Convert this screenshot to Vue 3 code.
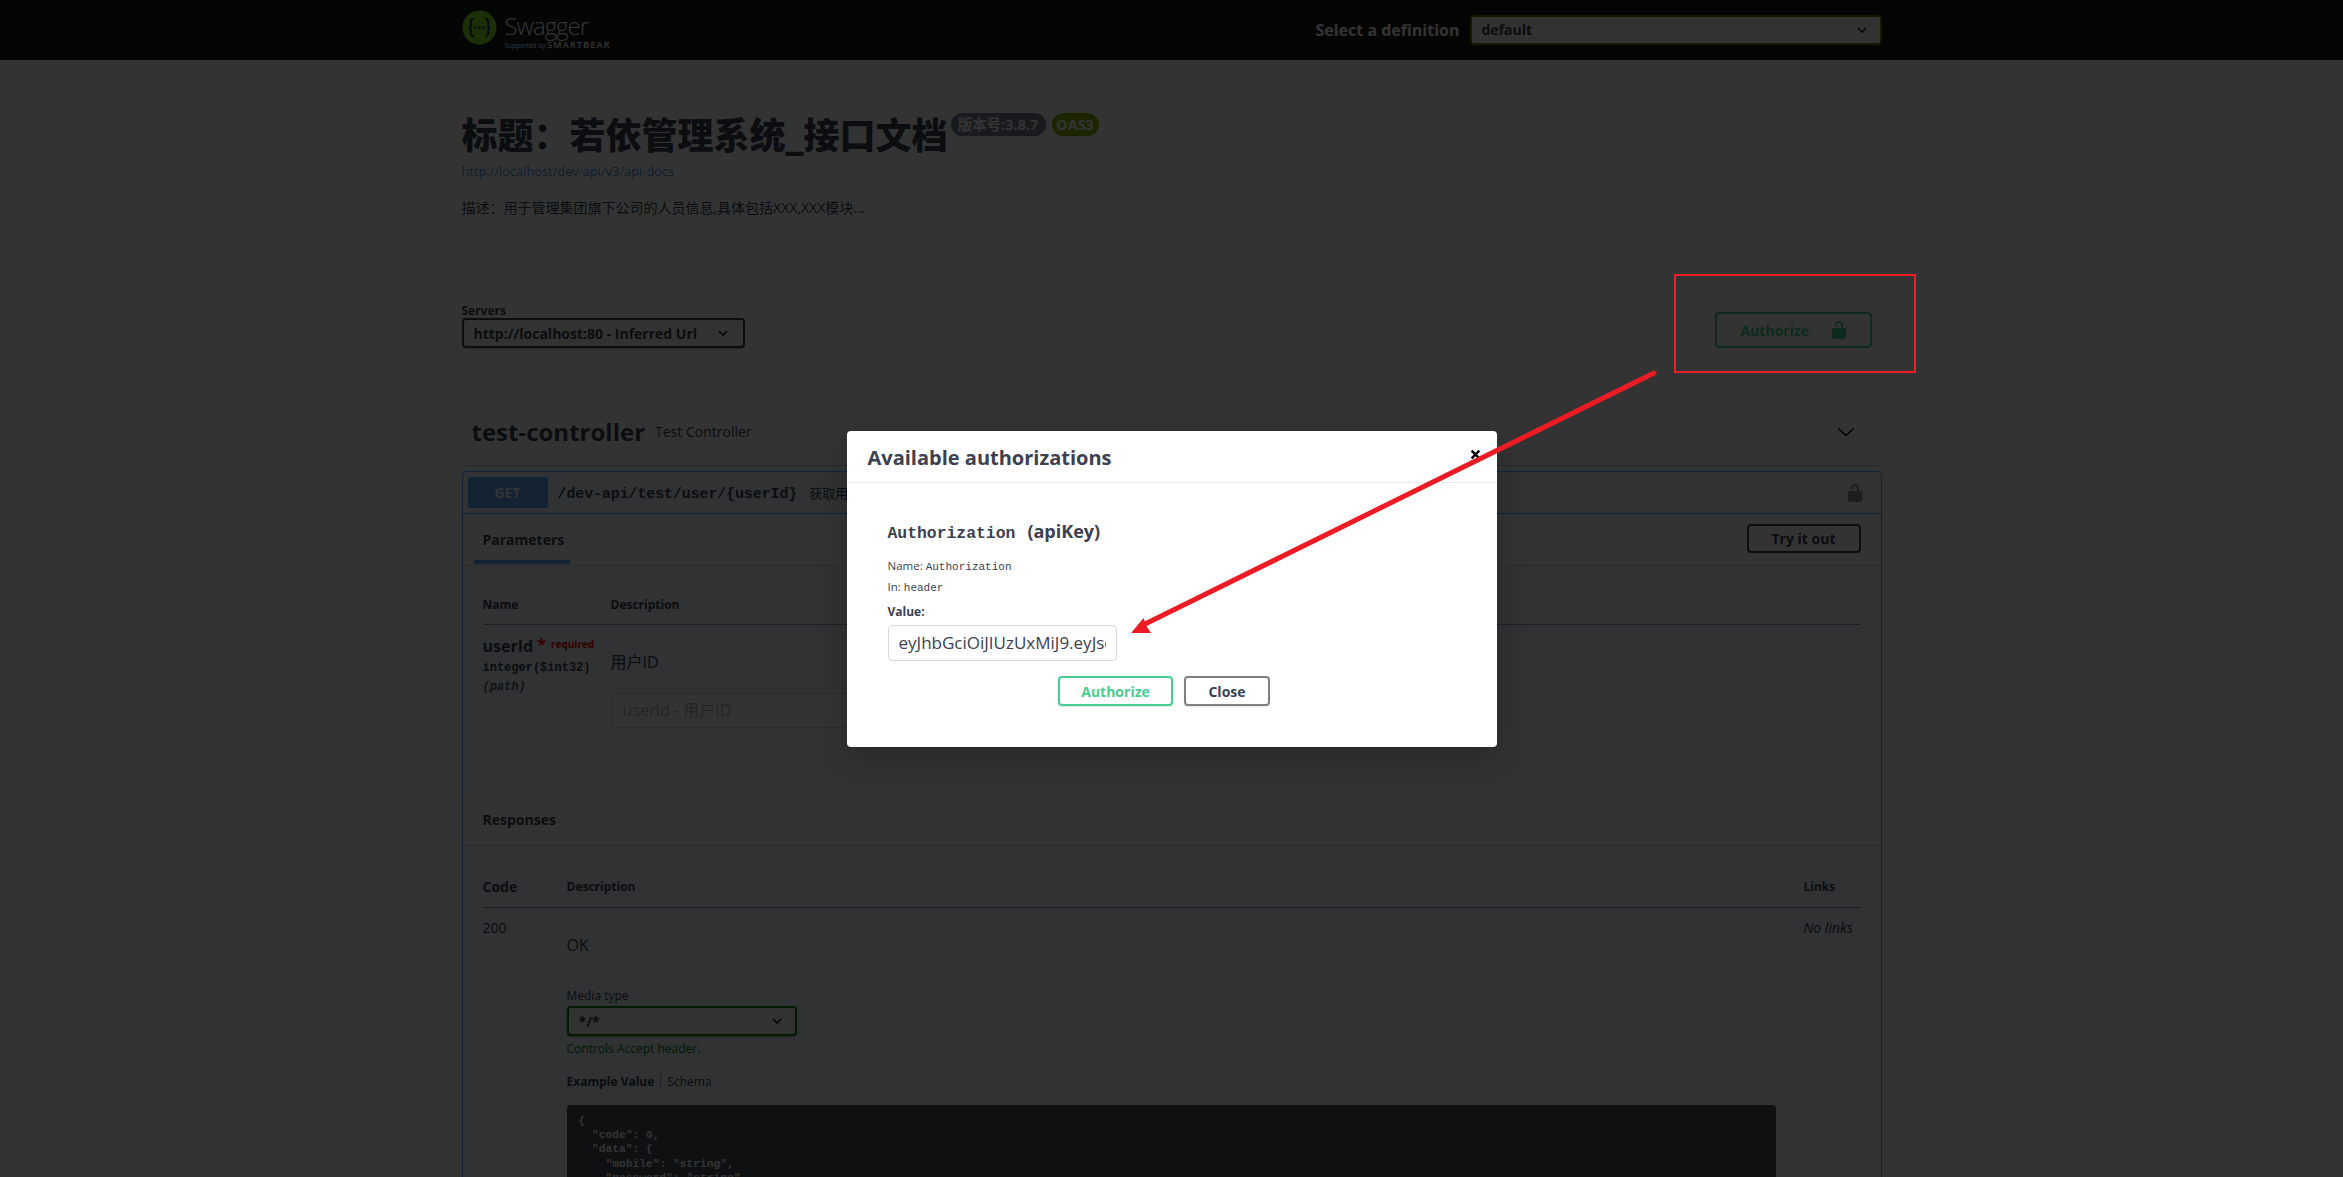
<script setup>
const codeLines = [
  '{',
  '  "code": 0,',
  '  "data": {',
  '    "mobile": "string",',
  '    "password": "string",',
]
const unlock = 'M15.8 8H14V5.6C14 2.703 12.665 1 10 1 7.334 1 6 2.703 6 5.6V6h2v-.801C8 3.754 8.797 3 10 3c1.203 0 2 .754 2 2.199V8H4c-.553 0-1 .646-1 1.199V17c0 .549.428 1.139.951 1.307l1.197.387C5.672 18.861 6.55 19 7.1 19h5.8c.549 0 1.428-.139 1.951-.307l1.196-.387c.524-.167.953-.757.953-1.306V9.199C17 8.646 16.352 8 15.8 8z'
</script>

<template>
  <div class="screen">
    <header class="topbar">
      <div class="wrap topbar-in">
        <div class="logo">
          <svg class="logo-mark" viewBox="0 0 36 36">
            <circle cx="18" cy="18" r="17.5" fill="#85ea2d" />
            <path d="M12 9c-3 0-3 2-3 4v3c0 1.500-1 2-2 2 1 0 2 .5 2 2v3c0 2 0 4 3 4M24 9c3 0 3 2 3 4v3c0 1.500 1 2 2 2-1 0-2 .5-2 2v3c0 2 0 4-3 4" fill="none" stroke="#173647" stroke-width="2" />
            <circle cx="13.500" cy="18" r="1.300" fill="#173647" />
            <circle cx="18" cy="18" r="1.300" fill="#173647" />
            <circle cx="22.500" cy="18" r="1.300" fill="#173647" />
          </svg>
          <div class="logo-text">
            <div class="logo-name">Swagger<span class="logo-dot">.</span></div>
            <div class="logo-sub">Supported by <b>SMARTBEAR</b></div>
          </div>
        </div>
        <div class="definition">
          <span class="definition-label">Select a definition</span>
          <div class="select top-select">
            <span>default</span>
            <svg class="chev" viewBox="0 0 20 20"><path d="M5 7.500l5 5 5-5" fill="none" stroke="currentColor" stroke-width="2" /></svg>
          </div>
        </div>
      </div>
    </header>

    <main class="wrap">
      <section class="info">
        <div class="title-row">
          <h1>标题：若依管理系统_接口文档</h1>
          <span class="pill version">版本号:3.8.7</span>
          <span class="pill oas">OAS3</span>
        </div>
        <div class="url">http://localhost/dev-api/v3/api-docs</div>
        <div class="desc">描述：用于管理集团旗下公司的人员信息,具体包括XXX,XXX模块...</div>
      </section>

      <section class="scheme">
        <div>
          <div class="servers-label">Servers</div>
          <div class="select server-select">
            <span>http://localhost:80 - Inferred Url</span>
            <svg class="chev" viewBox="0 0 20 20"><path d="M5 7.500l5 5 5-5" fill="none" stroke="currentColor" stroke-width="2" /></svg>
          </div>
        </div>
        <button class="btn-authorize">
          <span>Authorize</span>
          <svg class="lock-green" viewBox="0 0 20 20"><path :d="unlock" fill="#49cc90" /></svg>
        </button>
      </section>
    </main>
    <div class="scheme-rule"></div>

    <main class="wrap">
      <div class="tag-row">
        <span class="tag-name">test-controller</span>
        <span class="tag-desc">Test Controller</span>
        <svg class="tag-chev" viewBox="0 0 20 10"><path d="M1.500 1l8.500 8 8.500-8" fill="none" stroke="#000" stroke-width="1.600" /></svg>
      </div>

      <div class="opblock">
        <div class="summary">
          <span class="method">GET</span>
          <span class="path">/dev-api/test/user/{userId}</span>
          <span class="summary-desc">获取用户详细</span>
          <svg class="lock-gray" viewBox="0 0 20 20"><path :d="unlock" fill="#8c8f96" /></svg>
        </div>

        <div class="section-head params-head">
          <span class="tab">Parameters</span>
          <button class="try">Try it out</button>
        </div>

        <div class="inner">
          <div class="param-head"><span class="name-col">Name</span><span>Description</span></div>
          <div class="param-row">
            <div class="name-col">
              <div class="param-name">userId <span class="star">*</span><span class="required">required</span></div>
              <div class="param-type">integer($int32)</div>
              <div class="param-in">(path)</div>
            </div>
            <div class="param-desc">
              <div class="param-text">用户ID</div>
              <div class="param-input">userId - 用户ID</div>
            </div>
          </div>
        </div>

        <div class="section-head resp-head"><span>Responses</span></div>

        <div class="inner">
          <div class="resp-grid resp-columns">
            <span class="code-title">Code</span><span>Description</span><span>Links</span>
          </div>
          <div class="resp-grid resp-row">
            <div class="status">200</div>
            <div>
              <div class="ok">OK</div>
              <div class="media-label">Media type</div>
              <div class="select media-select">
                <span>*/*</span>
                <svg class="chev" viewBox="0 0 20 20"><path d="M5 7.500l5 5 5-5" fill="none" stroke="currentColor" stroke-width="2" /></svg>
              </div>
              <div class="controls">Controls Accept header.</div>
              <div class="example-tabs"><b>Example Value</b><i class="divider"></i><span>Schema</span></div>
              <div class="code-box"><div v-for="(line, i) in codeLines" :key="i" class="code-line">{{ line }}</div></div>
            </div>
            <div class="no-links">No links</div>
          </div>
        </div>
      </div>
    </main>

    <div class="backdrop">
      <div class="modal">
        <div class="modal-head">
          <span class="modal-title">Available authorizations</span>
          <svg class="modal-x" viewBox="0 0 10 10"><path d="M1.500 1.500l7 7M8.500 1.500l-7 7" stroke="#000" stroke-width="2.200" /></svg>
        </div>
        <div class="modal-body">
          <div class="auth-title"><span class="mono">Authorization</span><span class="auth-kind">(apiKey)</span></div>
          <div class="auth-line first">Name: <span class="mono">Authorization</span></div>
          <div class="auth-line second">In: <span class="mono">header</span></div>
          <div class="value-label">Value:</div>
          <div class="value-input"><span>eyJhbGciOiJIUzUxMiJ9.eyJsd</span></div>
          <div class="modal-actions">
            <button class="modal-btn green">Authorize</button>
            <button class="modal-btn gray">Close</button>
          </div>
        </div>
      </div>
    </div>

    <svg class="annotations" viewBox="0 0 2343 1177">
      <rect x="1675" y="275" width="240" height="97" fill="none" stroke="#ed1c24" stroke-width="2" />
      <path d="M1654 373L1143 625" fill="none" stroke="#ed1c24" stroke-width="5" stroke-linecap="round" />
      <path d="M1131 633L1143.500 618 1147 627 1151 633z" fill="#ed1c24" />
    </svg>
  </div>
</template>

<style>
html, body { margin: 0; overflow: hidden; background: #fff; }
</style>

<style scoped>
.screen {
  position: relative;
  width: 2343px;
  height: 1177px;
  overflow: hidden;
  background: #fff;
  color: #3b4151;
  font-family: "Open Sans", "Noto Sans CJK SC", sans-serif;
}
.wrap { width: 1420px; margin: 0 auto; }
.mono { font-family: "Liberation Mono", "Noto Sans CJK SC", monospace; }

.topbar { height: 60px; background: #1b1b1b; }
.topbar-in { display: flex; align-items: center; justify-content: space-between; height: 60px; }
.logo { display: flex; align-items: flex-start; color: #fff; padding-top: 1px; }
.logo-mark { width: 35px; height: 35px; display: block; margin-right: 8px; }
.logo-name { font-size: 24px; line-height: 32px; font-weight: 300; letter-spacing: -1px; height: 29px; }
.logo-dot { font-size: 8px; }
.logo-sub { font-size: 6.5px; line-height: 12px; white-space: nowrap; }
.logo-sub b { font-size: 9px; font-weight: 600; letter-spacing: 1.200px; }
.definition { display: flex; align-items: center; }
.definition-label { color: #fff; font-size: 16px; font-weight: 700; margin-right: 10px; }

.select {
  display: flex;
  align-items: center;
  justify-content: space-between;
  box-sizing: border-box;
  height: 30px;
  border: 2px solid #41444e;
  border-radius: 4px;
  background: #f7f7f7;
  color: #3b4151;
  font-size: 14px;
  font-weight: 700;
  padding: 0 10px;
  box-shadow: 0 1px 2px rgba(0, 0, 0, .25);
}
.chev { width: 16px; height: 16px; color: #222; flex: none; }
.top-select { width: 412px; border-color: #547f00; }
.top-select span { margin-top: -2px; }

.info { padding-top: 56px; }
.title-row { display: flex; align-items: flex-start; }
h1 { margin: 0; font-size: 36px; line-height: 40px; height: 40px; font-weight: 900; color: #3b4151; }
.pill {
  height: 23px;
  line-height: 23px;
  border-radius: 12px;
  color: #fff;
  font-size: 14.500px;
  font-weight: 700;
  box-sizing: border-box;
  margin-top: -3px;
  text-align: center;
  white-space: nowrap;
}
.version { width: 95px; background: #7d8492; margin-left: 3px; }
.oas { width: 47px; background: #89bf04; margin-left: 6px; }
.url { margin-top: 5px; height: 20px; font-size: 12.800px; line-height: 20px; color: #4990e2; }
.desc { margin-top: 17px; height: 20px; font-size: 14px; line-height: 20px; }

.scheme {
  margin-top: 85px;
  display: flex;
  justify-content: space-between;
  align-items: flex-end;
  padding-bottom: 30px;
}
.servers-label { font-size: 12px; font-weight: 700; line-height: 15px; }
.server-select { width: 283px; padding-right: 12px; }
.btn-authorize {
  display: flex;
  align-items: center;
  justify-content: space-between;
  box-sizing: border-box;
  width: 157px;
  height: 36px;
  margin-right: 10px;
  padding: 0 21px 0 24px;
  background: transparent;
  border: 2px solid #49cc90;
  border-radius: 4px;
  color: #49cc90;
  font: 700 14px "Open Sans", sans-serif;
}
.lock-green { width: 20px; height: 20px; }
.scheme-rule { height: 1px; background: rgba(59, 65, 81, .15); }

.tag-row {
  display: flex;
  align-items: center;
  box-sizing: border-box;
  height: 66px;
  margin-top: 21px;
  padding: 0 0 2px 10px;
  border-bottom: 1px solid rgba(59, 65, 81, .3);
}
.tag-name { font-size: 24px; font-weight: 700; margin-right: 10px; }
.tag-desc { font-size: 14px; flex: 1; }
.tag-chev { width: 18px; height: 10px; margin-right: 27px; }

.opblock {
  margin-top: 5px;
  border: 1px solid #61affe;
  border-radius: 4px;
  background: #eff7ff;
  height: 900px;
}
.summary {
  display: flex;
  align-items: center;
  height: 41px;
  border-bottom: 1px solid #61affe;
  padding-left: 5px;
}
.method {
  width: 80px;
  height: 31px;
  line-height: 31px;
  text-align: center;
  background: #61affe;
  border-radius: 3px;
  color: #fff;
  font-size: 14px;
  font-weight: 700;
}
.path {
  margin: 2px 0 0 10px;
  font-family: "Liberation Mono", monospace;
  font-size: 14.800px;
  font-weight: 700;
  white-space: nowrap;
}
.summary-desc { margin-left: 12px; font-size: 13px; flex: 1; }
.lock-gray { width: 20px; height: 20px; margin-right: 16px; }

.section-head { display: flex; align-items: center; background: rgba(255, 255, 255, .8); }
.params-head { position: relative; height: 50px; justify-content: space-between; box-shadow: 0 1px 2px rgba(0, 0, 0, .1); }
.tab {
  align-self: flex-end;
  box-sizing: border-box;
  height: 50px;
  width: 96px;
  margin-left: 11px;
  padding: 11px 0 0 9px;
  font-size: 14px;
  line-height: 30px;
  font-weight: 700;
  border-bottom: 4px solid #61affe;
}
.try {
  box-sizing: border-box;
  width: 114px;
  height: 29px;
  margin-right: 20px;
  margin-top: -2px;
  background: transparent;
  border: 2px solid #41444e;
  border-radius: 4px;
  color: #3b4151;
  font: 700 14px "Open Sans", sans-serif;
}
.inner { padding: 0 20px; }
.param-head {
  display: flex;
  box-sizing: border-box;
  height: 61px;
  padding-top: 32px;
  font-size: 12px;
  line-height: 18px;
  font-weight: 700;
  border-bottom: 1px solid rgba(59, 65, 81, .5);
}
.name-col { width: 128px; flex: none; }
.param-row { display: flex; padding-bottom: 65px; }
.param-name { padding-top: 10px; font-size: 16px; line-height: 22px; height: 22px; font-weight: 700; white-space: nowrap; }
.star { position: relative; top: -2px; color: #f00; font-size: 16px; }
.required { position: relative; top: -4px; color: #f00; font-size: 10px; margin-left: 5px; }
.param-type { margin-top: 2px; font-family: "Liberation Mono", monospace; font-size: 12px; font-weight: 700; line-height: 18px; white-space: nowrap; }
.param-in { margin-top: 1px; font-family: "Liberation Mono", monospace; font-size: 12px; font-weight: 700; font-style: italic; line-height: 18px; opacity: .85; }
.param-desc { padding-top: 26px; }
.param-text { font-size: 16px; line-height: 22px; height: 22px; }
.param-input {
  box-sizing: border-box;
  width: 340px;
  height: 35px;
  margin-top: 20px;
  padding-left: 11px;
  background: #fff;
  border: 1px solid #d9d9d9;
  border-radius: 4px;
  color: #b5b5b5;
  font-size: 16px;
  line-height: 33px;
}
.resp-head { position: relative; box-sizing: border-box; height: 51px; padding: 1px 0 0 20px; font-size: 14px; font-weight: 700; box-shadow: 0 1px 2px rgba(0, 0, 0, .1); }
.resp-grid { display: grid; grid-template-columns: 84px 1fr 57px; }
.resp-columns {
  box-sizing: border-box;
  height: 64px;
  padding-top: 34px;
  font-size: 12px;
  line-height: 18px;
  font-weight: 700;
  border-bottom: 1px solid rgba(59, 65, 81, .5);
}
.code-title { font-size: 14px; }
.status { padding-top: 11px; font-size: 14px; line-height: 18px; }
.no-links { padding-top: 11px; font-size: 14px; line-height: 18px; font-style: italic; white-space: nowrap; }
.ok { padding-top: 26px; font-size: 16px; line-height: 22px; }
.media-label { margin-top: 32px; font-size: 12px; line-height: 16px; }
.media-select { width: 230px; margin-top: 2px; border-color: #008000; }
.controls { margin-top: 5px; font-size: 12px; line-height: 16px; color: #008000; }
.example-tabs { display: flex; align-items: center; margin-top: 17px; font-size: 12px; line-height: 16px; }
.example-tabs b { font-weight: 700; }
.divider { width: 1px; height: 16px; background: rgba(0, 0, 0, .3); margin: 0 6px; }
.code-box {
  box-sizing: border-box;
  width: 1209px;
  height: 200px;
  margin-top: 15px;
  padding: 9px 12px;
  background: #4a5058;
  border-radius: 4px;
  color: #fff;
}
.code-line { font-family: "Liberation Mono", monospace; font-size: 11.250px; font-weight: 700; line-height: 14.200px; white-space: pre; }

.backdrop {
  position: absolute;
  inset: 0;
  display: flex;
  justify-content: center;
  align-items: flex-start;
  padding-top: 431px;
  background: rgba(0, 0, 0, .8);
}
.modal {
  box-sizing: border-box;
  width: 650px;
  height: 316px;
  background: #fff;
  border-radius: 4px;
  box-shadow: 0 10px 30px rgba(0, 0, 0, .2);
}
.modal-head {
  display: flex;
  align-items: center;
  justify-content: space-between;
  box-sizing: border-box;
  height: 52px;
  padding: 2px 16px 0 21px;
  border-bottom: 1px solid #ebebeb;
}
.modal-title { font-size: 20px; font-weight: 700; color: #3b4151; }
.modal-x { width: 11px; height: 11px; margin-top: -6px; }
.modal-body { padding: 37px 56px 0 41px; }
.auth-title { display: flex; align-items: baseline; height: 22px; font-size: 16.400px; line-height: 22px; font-weight: 700; white-space: nowrap; }
.auth-kind { font-size: 18px; margin-left: 12px; }
.auth-line { height: 18px; font-size: 11.500px; line-height: 18px; overflow: hidden; }
.auth-line .mono { font-size: 11px; }
.first { margin-top: 15px; }
.second { margin-top: 3px; }
.value-label { margin-top: 8px; font-size: 12px; line-height: 16px; font-weight: 700; }
.value-input {
  box-sizing: border-box;
  width: 229px;
  height: 36px;
  margin-top: 5px;
  padding: 0 10px;
  white-space: nowrap;
  border: 1px solid #d9d9d9;
  border-radius: 4px;
  font-size: 17px;
  line-height: 34px;
  color: #3b4151;
}
.value-input span { display: block; overflow: hidden; }
.modal-actions { display: flex; justify-content: center; gap: 11px; margin-top: 15px; }
.modal-btn {
  box-sizing: border-box;
  height: 30px;
  padding: 0;
  background: transparent;
  border-radius: 4px;
  font: 700 14px "Open Sans", sans-serif;
  box-shadow: 0 1px 2px rgba(0, 0, 0, .1);
}
.green { width: 115px; border: 2px solid #49cc90; color: #49cc90; }
.gray { width: 86px; border: 2px solid #808080; color: #3b4151; }

.annotations { position: absolute; inset: 0; width: 2343px; height: 1177px; pointer-events: none; }
</style>
